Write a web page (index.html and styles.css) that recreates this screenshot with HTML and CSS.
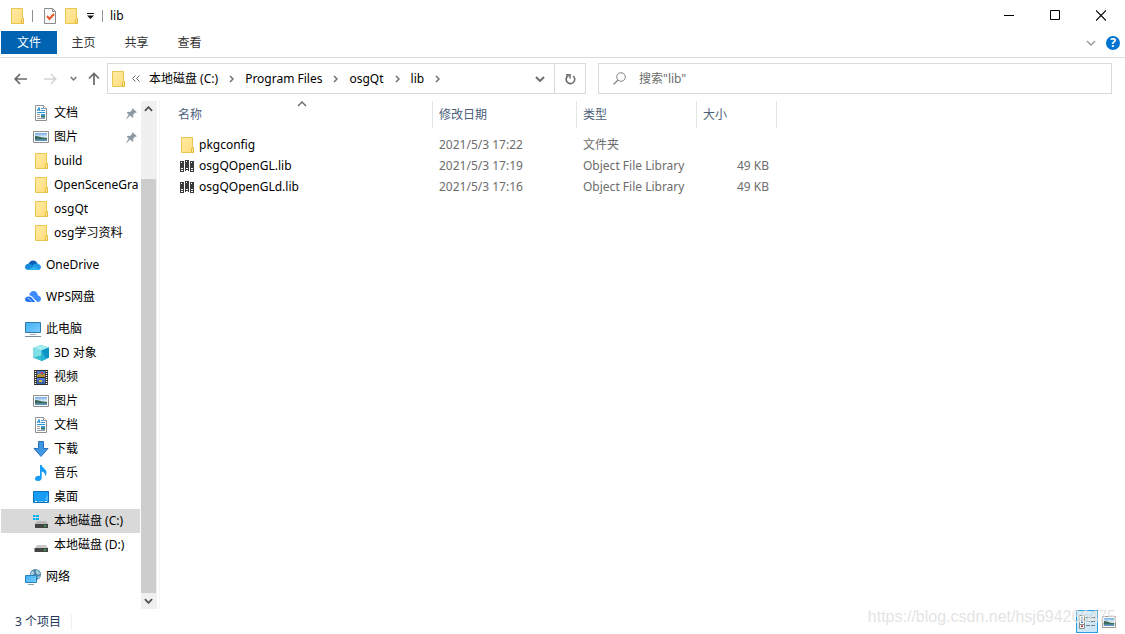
FILE: index.html
```html
<!DOCTYPE html>
<html lang="zh-CN">
<head>
    <meta charset="UTF-8">
    <meta name="viewport" content="width=device-width, initial-scale=1.0">
    <title>lib</title>
    <link rel="stylesheet" href="styles.css">
</head>
<body>
    <svg class="sprite" aria-hidden="true">
        <defs>
            <linearGradient id="gFolder" x1="0" y1="0" x2="1" y2="1">
                <stop offset="0" stop-color="#ffeba6"/><stop offset="1" stop-color="#ffdc78"/>
            </linearGradient>
            <linearGradient id="gScreen" x1="0" y1="0" x2="1" y2="1">
                <stop offset="0" stop-color="#3fb0f5"/><stop offset="1" stop-color="#7cccff"/>
            </linearGradient>
            <linearGradient id="gSky" x1="0" y1="0" x2="0" y2="1">
                <stop offset="0" stop-color="#6fa8e4"/><stop offset="0.5" stop-color="#e4f2fb"/><stop offset="0.75" stop-color="#7fb0cc"/><stop offset="1" stop-color="#4d8fbf"/>
            </linearGradient>
        </defs>
        <symbol id="folder" viewBox="0 0 16 16">
            <path d="M1.5 .5h11v10h1v5h-12z" fill="url(#gFolder)" stroke="#eac54f"/>
            <path d="M11.5 15v-3.5l1-1h1v5h-2z" fill="#ffe596" stroke="#e3b93c"/>
        </symbol>
        <symbol id="document" viewBox="0 0 16 16">
            <path d="M2.500 .5h8l3 3v12h-11z" fill="#fff" stroke="#8c9296"/>
            <path d="M10.500 .5v3h3" fill="#fff" stroke="#8c9296"/>
            <path d="M4 6l2-3.500L7 6M5 5h2" fill="none" stroke="#1f86c9"/>
            <path d="M8 3.500h2M8 5.500h4M4 7.500h8" stroke="#2a95d8"/>
            <path d="M4 9.500h3M4 11.500h3M4 13.500h8" stroke="#9aa0a4"/>
            <path d="M8 9h4v3.500H8z" fill="#3a91cc"/><path d="M8 11h4v1.500H8z" fill="#397c62"/>
        </symbol>
        <symbol id="picture" viewBox="0 0 16 16">
            <path d="M.5 2.500h15v11H.5z" fill="#fff" stroke="#8f8f8f"/>
            <path d="M2 4h12v8H2z" fill="url(#gSky)"/>
            <path d="M2 7c3 0 6 1.500 12 2v1.500H2z" fill="#3b6a5c"/>
        </symbol>
        <symbol id="onedrive" viewBox="0 0 16 16">
            <path d="M3 11C2.500 7 5 3.500 8 3.500s4 2 4.500 3.500L8 12z" fill="#0f5fb4"/>
            <path d="M8 7.500l3-1c3 0 4.500 1.500 5 3.500-.2 1.800-1.200 3-3 3H8z" fill="#2198e4"/>
            <path d="M3.500 13C1.500 13 0 12 0 10s1.800-3.500 3.800-3.200c2 0 3 .8 4.200 1.700l6 4c-.5.3-1 .5-1.500.5z" fill="#168bdc"/>
            <path d="M2.500 12.700L9 9.200l5.500 3c-.5.6-1.200.8-2 .8H3.500z" fill="#30b1f0"/>
        </symbol>
        <symbol id="wps" viewBox="0 0 16 16">
            <path d="M4 6.500C4.500 4 6.500 2 8.500 2c2.500 0 4 1.800 4.300 4.300C15 7 16 8.500 16 10c0 2-1.500 3-3.500 3z" fill="#3c8cfb"/>
            <path d="M3 6.500c4-1 6 4 9 6.500H9z" fill="#fff"/>
            <path d="M3.500 7.500c3-.5 4.500 3 7 5.500H3.500C1.300 13 0 12 0 10.300s1.500-2.800 3.500-2.800z" fill="#2175f5"/>
            <path d="M2.500 9.500c2 0 3 1.500 4 3" fill="none" stroke="#d5e6ff" stroke-width=".8"/>
        </symbol>
        <symbol id="computer" viewBox="0 0 16 16">
            <path d="M.5 1.500h15v10H.5z" fill="url(#gScreen)" stroke="#3179a8"/>
            <path d="M5 13.500h6" stroke="#9fb3bf"/><path d="M0 15.500h16" stroke="#7a8d99"/>
        </symbol>
        <symbol id="cube" viewBox="0 0 16 16">
            <path d="M0 3l8-3 8 2.500v10L8.500 16 0 12.500z" fill="#35bdd0"/>
            <path d="M0 3l8-3 8 2.500L8.500 5.500z" fill="#a5edf2"/>
            <path d="M16 2.500v10L8.500 16V5.500z" fill="#0d93c4"/>
            <path d="M0 3l8.500 2.500v5L0 12.500z" fill="#7fdfe4"/><path d="M8.500 5.500L13 14l-4.500 2z" fill="#27b5d6"/>
        </symbol>
        <symbol id="video" viewBox="0 0 16 16">
            <path d="M1 1h14v15H1z" fill="#30302f"/>
            <path d="M2.500 2v14M13.500 2v14" stroke="#fff" stroke-width="1.400" stroke-dasharray="1 1"/>
            <path d="M4 2h8v6H4zM4 9h8v6H4z" fill="#4b79d9"/>
            <path d="M4 6l3-2 2 2 3-2v4H4z" fill="#b58e28"/><path d="M4 12l3-2 2 3 3-1v3H4z" fill="#3963a4"/>
            <path d="M8 3h2v2H8z" fill="#d53a36"/><path d="M6 11h3v2H6z" fill="#dfbc35"/>
        </symbol>
        <symbol id="download" viewBox="0 0 16 16">
            <path d="M5.500 .5h5v7h4.500l-7 8-7-8h4.500z" fill="#3f97e4" stroke="#2b74bd"/>
        </symbol>
        <symbol id="music" viewBox="0 0 16 16">
            <path d="M7 0h1.700c.3 3 4.800 4 4.800 7.500 0 1.500-.7 3-1.500 3.500.5-2.500-1-4-3.300-4.500V13c0 1.800-1.700 3-3.700 3s-3-1-3-2.300C2 12 3.800 10.800 5.500 10.800c.6 0 1 .1 1.500.3z" fill="#169cf2"/>
        </symbol>
        <symbol id="desktop" viewBox="0 0 16 16">
            <path d="M.5 2.500h15v11H.5z" fill="#179df5" stroke="#0b6fb9"/>
            <path d="M12 10l3-5v7z" fill="#48b7fb"/><path d="M2 12.500h2M12 12.500h2" stroke="#fff"/><path d="M5 12.500h6" stroke="#59bdf7"/>
        </symbol>
        <symbol id="drive" viewBox="0 0 16 16">
            <path d="M4 8h9l2 3H2z" fill="#c9c9c9"/><path d="M1.500 11h13.500v4H1.500z" fill="#414544"/><path d="M11 13h2" stroke="#45e263"/>
        </symbol>
        <symbol id="windrive" viewBox="0 0 16 16">
            <path d="M4 8h9l2 3H2z" fill="#b9b9b9"/><path d="M2 11h13v4H2z" fill="#414544"/><path d="M11 13h2" stroke="#45e263"/>
            <path d="M0 2h2.500v2H0zM3 2h3v2H3zM0 5h2.500v2H0zM3 5h3v2H3z" fill="#06b3ef"/>
        </symbol>
        <symbol id="network" viewBox="0 0 16 16">
            <circle cx="10.500" cy="5.500" r="5.500" fill="#4f86a8"/>
            <path d="M7 2c2 0 3 1 2 2.500L7 7 5.500 5zM11 1c2 0 4 2 4 4l-2 1-2-2zM12 8l3-1-1 3z" fill="#a9cfdf"/>
            <path d="M.5 6.500h11v7H.5z" fill="url(#gScreen)" stroke="#2984bb"/><path d="M3 15.500h6" stroke="#8aa2b0"/>
        </symbol>
        <symbol id="pin" viewBox="0 0 12 12">
            <path d="M7 0l5 4.500-1.500.8-.7-.2-2 2.300.2 2.300-1.200 1-2.200-2.500L.8 12l-.6-.5L3 7.300.8 5.200l1.200-1 2.500.2L6.700 2z" fill="#8d9aa5"/>
        </symbol>
        <symbol id="lib" viewBox="0 0 15 12">
            <path d="M0 1h4v11H0zM5 0h4v11H5zM10 1h4v11h-4z" fill="#3b3b3b"/>
            <path d="M1 2.500h1M6 1.500h1M11 2.500h1M1 8.500h2M6 8.500h2M11 8.500h2M1 10.500h2M6 10.500h2M11 10.500h2" stroke="#fff"/>
        </symbol>
        <symbol id="down" viewBox="0 0 10 6"><path d="M1 1l4 4 4-4" fill="none" stroke="currentColor" stroke-width="var(--w, 2)"/></symbol>
        <symbol id="right" viewBox="0 0 5 8"><path d="M1 1l3 3-3 3" fill="none" stroke="#707070" stroke-width="1.500"/></symbol>
    </svg>

    <header class="titlebar">
        <svg class="icon"><use href="#folder"/></svg>
        <span class="bar"></span>
        <button class="quick" aria-label="属性">
            <svg class="icon" viewBox="0 0 16 16"><path d="M2.500 .5h8l3 3v12h-11z" fill="#fafafa" stroke="#8a8a8a"/><path d="M10.500 .5v3h3" fill="none" stroke="#8a8a8a"/><path d="M5 8l2.500 3L12 6" fill="none" stroke="#e8562a" stroke-width="2"/></svg>
        </button>
        <button class="quick" aria-label="新建文件夹"><svg class="icon"><use href="#folder"/></svg></button>
        <button class="quick quick-menu" aria-label="自定义快速访问工具栏">
            <svg width="7" height="6" viewBox="0 0 7 6"><path d="M0 .5h7" stroke="#111"/><path d="M0 2.500h7L3.500 6z" fill="#111"/></svg>
        </button>
        <span class="bar"></span>
        <span class="window-title">lib</span>
        <div class="window-buttons">
            <button aria-label="最小化"><svg width="10" height="11"><path d="M0 5.500h10" stroke="#000"/></svg></button>
            <button aria-label="最大化"><svg width="10" height="11"><path d="M.5 .5h9v9h-9z" fill="none" stroke="#000"/></svg></button>
            <button aria-label="关闭"><svg width="10" height="11"><path d="M0 .5l10 10M10 .5l-10 10" stroke="#000" stroke-width="1.200"/></svg></button>
        </div>
    </header>

    <div class="ribbon">
        <button class="tab tab-file">文件</button>
        <button class="tab">主页</button>
        <button class="tab">共享</button>
        <button class="tab">查看</button>
        <button class="expand" aria-label="展开功能区"><svg class="thin" width="10" height="6"><use href="#down"/></svg></button>
        <button class="help" aria-label="帮助">?</button>
    </div>

    <div class="toolbar">
        <div class="nav-buttons">
            <button aria-label="后退"><svg width="13" height="12" viewBox="0 0 13 12"><path d="M13 6H1.500M6 1L1.200 6 6 11" fill="none" stroke="#686868" stroke-width="1.700"/></svg></button>
            <button aria-label="前进"><svg width="13" height="12" viewBox="0 0 13 12"><path d="M0 6h11.500M7 1l4.800 5L7 11" fill="none" stroke="#d2d2d2" stroke-width="1.400"/></svg></button>
            <button class="recent" aria-label="最近浏览的位置"><svg width="7" height="5"><use href="#down"/></svg></button>
            <button class="up" aria-label="上移"><svg width="12" height="13" viewBox="0 0 12 13"><path d="M6 13V1.500M1 6.500l5-5 5 5" fill="none" stroke="#686868" stroke-width="1.700"/></svg></button>
        </div>
        <div class="address">
            <svg class="icon"><use href="#folder"/></svg>
            <svg class="chevrons" width="8" height="7" viewBox="0 0 8 7"><path d="M3.500 .5l-3 3 3 3M7.500 .5l-3 3 3 3" fill="none" stroke="#686868"/></svg>
            <a href="#">本地磁盘 (C:)</a>
            <svg class="sep"><use href="#right"/></svg>
            <a href="#">Program Files</a>
            <svg class="sep"><use href="#right"/></svg>
            <a href="#">osgQt</a>
            <svg class="sep"><use href="#right"/></svg>
            <a href="#">lib</a>
            <svg class="sep"><use href="#right"/></svg>
            <button class="history" aria-label="以前的位置"><svg width="10" height="6"><use href="#down"/></svg></button>
            <button class="refresh" aria-label="刷新"><svg width="11" height="12" viewBox="0 0 11 12"><path d="M8.200 3A4.300 4.300 0 1 1 3.500 2.500" fill="none" stroke="#6e6e6e" stroke-width="1.600"/><path d="M1 1.700H5V5.500" fill="none" stroke="#6e6e6e" stroke-width="1.500"/></svg></button>
        </div>
        <label class="search">
            <svg width="13" height="13" viewBox="0 0 13 13"><circle cx="8" cy="5" r="4.300" fill="none" stroke="#858585"/><path d="M5 8L.5 12.500" stroke="#858585" stroke-width="1.200"/></svg>
            <input type="text" placeholder='搜索"lib"' aria-label="搜索">
        </label>
    </div>

    <div class="content">
        <nav class="tree">
            <a class="child" href="#"><svg class="icon"><use href="#document"/></svg><span>文档</span><svg class="pin"><use href="#pin"/></svg></a>
            <a class="child" href="#"><svg class="icon"><use href="#picture"/></svg><span>图片</span><svg class="pin"><use href="#pin"/></svg></a>
            <a class="child" href="#"><svg class="icon folder-icon"><use href="#folder"/></svg><span>build</span></a>
            <a class="child" href="#"><svg class="icon folder-icon"><use href="#folder"/></svg><span>OpenSceneGra</span></a>
            <a class="child" href="#"><svg class="icon folder-icon"><use href="#folder"/></svg><span>osgQt</span></a>
            <a class="child" href="#"><svg class="icon folder-icon"><use href="#folder"/></svg><span>osg学习资料</span></a>
            <a class="root" href="#"><svg class="icon"><use href="#onedrive"/></svg><span>OneDrive</span></a>
            <a class="root" href="#"><svg class="icon"><use href="#wps"/></svg><span>WPS网盘</span></a>
            <a class="root" href="#"><svg class="icon"><use href="#computer"/></svg><span>此电脑</span></a>
            <a class="child" href="#"><svg class="icon"><use href="#cube"/></svg><span>3D 对象</span></a>
            <a class="child" href="#"><svg class="icon"><use href="#video"/></svg><span>视频</span></a>
            <a class="child" href="#"><svg class="icon"><use href="#picture"/></svg><span>图片</span></a>
            <a class="child" href="#"><svg class="icon"><use href="#document"/></svg><span>文档</span></a>
            <a class="child" href="#"><svg class="icon"><use href="#download"/></svg><span>下载</span></a>
            <a class="child" href="#"><svg class="icon"><use href="#music"/></svg><span>音乐</span></a>
            <a class="child" href="#"><svg class="icon"><use href="#desktop"/></svg><span>桌面</span></a>
            <a class="child selected" href="#"><svg class="icon"><use href="#windrive"/></svg><span>本地磁盘 (C:)</span></a>
            <a class="child" href="#"><svg class="icon"><use href="#drive"/></svg><span>本地磁盘 (D:)</span></a>
            <a class="root" href="#"><svg class="icon"><use href="#network"/></svg><span>网络</span></a>
        </nav>
        <div class="scrollbar">
            <button class="scroll-up" aria-label="向上滚动"><svg width="9" height="6"><use href="#down"/></svg></button>
            <div class="track"><div class="thumb"></div></div>
            <button aria-label="向下滚动"><svg width="9" height="6"><use href="#down"/></svg></button>
        </div>
        <main class="files">
            <table>
                <colgroup>
                    <col class="col-name"><col class="col-date"><col class="col-type"><col class="col-size">
                </colgroup>
                <thead>
                    <tr>
                        <th>名称<svg class="sort" width="10" height="6"><use href="#down"/></svg></th>
                        <th>修改日期</th>
                        <th>类型</th>
                        <th>大小</th>
                    </tr>
                </thead>
                <tbody>
                    <tr>
                        <td><div class="name"><svg class="icon"><use href="#folder"/></svg>pkgconfig</div></td>
                        <td>2021/5/3 17:22</td>
                        <td>文件夹</td>
                        <td></td>
                    </tr>
                    <tr>
                        <td><div class="name"><svg class="lib-icon"><use href="#lib"/></svg>osgQOpenGL.lib</div></td>
                        <td>2021/5/3 17:19</td>
                        <td>Object File Library</td>
                        <td class="size">49 KB</td>
                    </tr>
                    <tr>
                        <td><div class="name"><svg class="lib-icon"><use href="#lib"/></svg>osgQOpenGLd.lib</div></td>
                        <td>2021/5/3 17:16</td>
                        <td>Object File Library</td>
                        <td class="size">49 KB</td>
                    </tr>
                </tbody>
            </table>
        </main>
    </div>

    <footer class="status">
        <span class="count">3 个项目</span>
        <div class="views">
            <button class="view active" aria-label="详细信息">
                <svg width="17" height="14" viewBox="0 0 17 14"><path d="M.5 .5h5v13h-5z" fill="#fff" stroke="#8b8b8b"/><path d="M.5 5h5M.5 9.500h5" stroke="#8b8b8b"/><path d="M2 2h2v1.500H2z" fill="#5a9a68"/><path d="M2 6.500h2V8H2z" fill="#3c82d0"/><path d="M2 10.500h2V12H2z" fill="#c32020"/><path d="M7 2.500h4M12 2.500h4M7 6.500h4M12 6.500h4M7 10.500h4M12 10.500h4" stroke="#757b80"/></svg>
            </button>
            <button class="view" aria-label="大图标"><svg width="14" height="12" viewBox="0 2 16 12" preserveAspectRatio="none"><use href="#picture" width="16" height="16"/></svg></button>
        </div>
        <span class="watermark">https://blog.csdn.net/hsj694266475</span>
    </footer>
</body>
</html>
```
FILE: styles.css
```css
* {
    box-sizing: border-box;
}
body {
    font-family: "Noto Sans", "Noto Sans CJK SC", sans-serif;
    font-size: 12px;
    line-height: 16px;
    color: #000;
    background-color: #fff;
    margin: 0;
    display: flex;
    flex-direction: column;
    min-height: 100vh;
}
button {
    font: inherit;
    color: inherit;
    background: none;
    border: none;
    padding: 0;
    display: flex;
    align-items: center;
    justify-content: center;
}
a {
    color: inherit;
    text-decoration: none;
    white-space: nowrap;
}
svg {
    display: block;
    flex: none;
}
.sprite {
    position: absolute;
    width: 0;
    height: 0;
}
.icon {
    width: 16px;
    height: 16px;
}

/* title bar */
.titlebar {
    display: flex;
    align-items: center;
    height: 31px;
    padding: 0 1px 0 10px;
}
.bar {
    width: 1px;
    height: 12px;
    background-color: #8f8f8f;
    margin: 0 6px;
}
.quick {
    width: 22px;
    height: 24px;
}
.quick-menu {
    width: 14px;
}
.titlebar .quick-menu + .bar {
    margin: 0 7px 0 5px;
}
.window-title {
    flex: 1;
}
.window-buttons {
    display: flex;
}
.window-buttons button {
    width: 46px;
    height: 30px;
}

/* ribbon tabs */
.ribbon {
    display: flex;
    align-items: center;
    height: 27px;
    padding: 0 5px 3px 1px;
    border-bottom: 1px solid #dadbdc;
}
.tab {
    width: 53px;
    height: 23px;
    padding-top: 1px;
    color: #333;
}
.tab-file {
    width: 56px;
    color: #fff;
    background-color: #0063b1;
}
.expand {
    margin-left: auto;
    width: 24px;
    height: 22px;
    color: #999;
}
.thin {
    --w: 1.4;
}
.help {
    width: 14px;
    height: 14px;
    margin-left: 3px;
    border-radius: 50%;
    background-color: #0073d2;
    color: #fff;
    font-weight: bold;
}

/* navigation row */
.toolbar {
    display: flex;
    align-items: center;
    padding: 5px 13px 6px 5px;
}
.nav-buttons {
    display: flex;
}
.nav-buttons button {
    width: 30px;
    height: 30px;
}
.nav-buttons .recent {
    width: 16px;
    color: #707070;
}
.nav-buttons .up {
    width: 26px;
}
.address,
.search {
    display: flex;
    align-items: center;
    height: 31px;
    border: 1px solid #d9d9d9;
}
.address {
    flex: 1;
    padding-left: 3px;
}
.chevrons {
    margin: 0 9px 0 5px;
}
.sep {
    width: 5px;
    height: 8px;
    margin: 0 11px;
}
.history {
    margin-left: auto;
    width: 29px;
    height: 29px;
    color: #707070;
}
.refresh {
    width: 31px;
    height: 29px;
    border-left: 1px solid #d9d9d9;
}
.search {
    flex: 0 1 514px;
    gap: 13px;
    margin-left: 12px;
    padding: 0 14px;
}
.search input {
    flex: 1;
    min-width: 0;
    font: inherit;
    border: none;
    outline: none;
    padding: 0;
}
.search input::placeholder {
    color: #6d6d6d;
    opacity: 1;
}

/* folder tree */
.content {
    display: flex;
    flex: 1;
    padding-top: 1px;
}
.tree {
    flex: none;
    width: 140px;
    padding-left: 1px;
}
.tree a {
    display: flex;
    align-items: center;
    gap: 5px;
    height: 24px;
    overflow: hidden;
}
.child {
    padding-left: 32px;
}
.folder-icon {
    margin: 0 -1px 0 1px;
}
.tree .root {
    padding-left: 24px;
    margin-top: 8px;
}
.selected {
    background-color: #d9d9d9;
}
.pin {
    width: 11px;
    height: 11px;
    margin-left: auto;
    margin-right: 3px;
}
.scrollbar {
    display: flex;
    flex-direction: column;
    width: 16px;
    margin-left: 1px;
    background-color: #f0f0f0;
    color: #505050;
}
.scrollbar button {
    width: 15px;
    height: 16px;
}
.scroll-up svg,
.sort {
    transform: rotate(180deg);
}
.track {
    flex: 1;
    display: flex;
    flex-direction: column;
    justify-content: flex-end;
}
.thumb {
    width: 15px;
    height: 87%;
    background-color: #cdcdcd;
}

/* file list */
.files {
    flex: 1;
    margin-left: 2px;
    padding-left: 12px;
    border-left: 1px solid #f5f5f5;
}
.files table {
    table-layout: fixed;
    width: 605px;
    border-collapse: separate;
    border-spacing: 0;
    color: #6d6d6d;
}
.col-name {
    width: 261px;
}
.col-date {
    width: 144px;
}
.col-type {
    width: 120px;
}
.col-size {
    width: 80px;
}
.files th {
    position: relative;
    height: 27px;
    padding: 0 6px;
    font-weight: normal;
    text-align: left;
    color: #4c607a;
    border-right: 1px solid #e5e5e5;
}
.sort {
    --w: 1.4;
    position: absolute;
    top: 0;
    left: 125px;
    color: #666;
}
.files td {
    height: 21px;
    padding: 0 6px;
}
.files tbody::before {
    content: "";
    display: block;
    height: 6px;
}
.files td.size {
    text-align: right;
    padding-right: 8px;
}
.name {
    display: flex;
    align-items: center;
    gap: 3px;
    padding-left: 2px;
    color: #000;
}
.lib-icon {
    width: 15px;
    height: 12px;
    margin-right: 1px;
}

/* status bar */
.status {
    position: relative;
    display: flex;
    align-items: center;
    height: 25px;
    padding: 0 5px 0 15px;
    color: #1e395b;
}
.count {
    padding-right: 10px;
    border-right: 1px solid #f0f0f0;
}
.views {
    display: flex;
    margin-left: auto;
}
.view {
    width: 22px;
    height: 23px;
}
.view.active {
    background-color: #cce8f7;
    border: 1px solid #26a0da;
}
.watermark {
    position: absolute;
    right: 9px;
    top: 0;
    font-family: "Liberation Sans", sans-serif;
    font-size: 16px;
    color: rgba(215, 215, 215, 0.7);
    text-shadow: 1px 1px 0 rgba(255, 255, 255, 0.6);
    pointer-events: none;
}
```
